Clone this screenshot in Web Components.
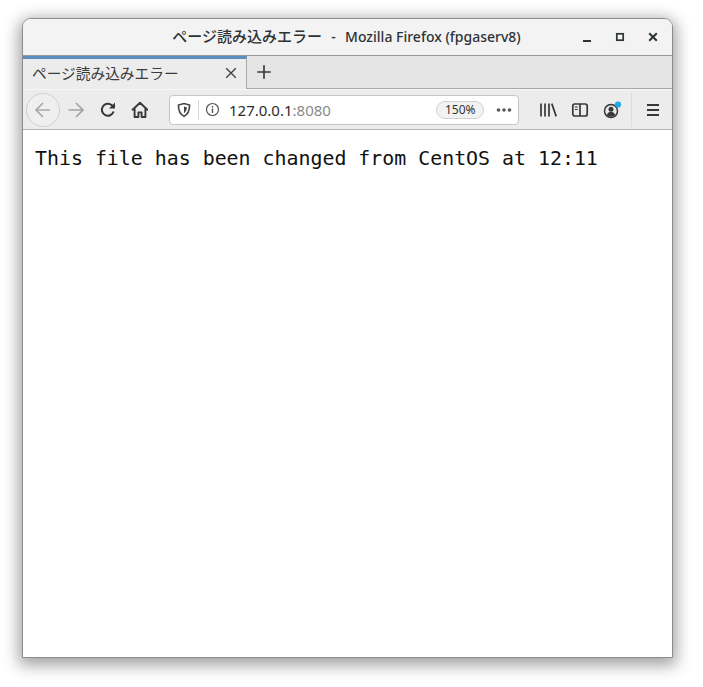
<!DOCTYPE html>
<html>
<head>
<meta charset="utf-8">
<title>ページ読み込みエラー</title>
<style>
html,body{margin:0;padding:0;background:#fff;}
body{width:703px;height:687px;overflow:hidden;padding:18px 0 0 22px;box-sizing:border-box;font-family:"Noto Sans","Noto Sans CJK JP",sans-serif;}
.jp{font-size:15px;}
.dash{padding:0 2px;}
</style>
</head>
<body>
<ff-window>
  <ff-titlebar><span class="jp">ページ読み込みエラー</span> &nbsp;<span class="dash">-</span>&nbsp; Mozilla Firefox (fpgaserv8)</ff-titlebar>
  <ff-tabs>ページ読み込みエラー</ff-tabs>
  <ff-toolbar></ff-toolbar>
  <ff-page>This file has been changed from CentOS at 12:11</ff-page>
</ff-window>
<script>
class FfWindow extends HTMLElement {
    connectedCallback() {
        let root = this.attachShadow({ mode: 'open' });
        root.innerHTML = `
    <style>
    :host{
        display:flex;
        flex-direction:column;
        width:651px;
        height:640px;
        box-sizing:border-box;
        border:1px solid #8c8c8c;
        border-radius:9px 9px 0 0;
        background:#fff;
        box-shadow:0 4px 16px 3px rgba(0,0,0,.38);
        overflow:hidden;
    }
    </style>
    <slot></slot>`;
    }
}
class FfTitlebar extends HTMLElement {
    connectedCallback() {
        let root = this.attachShadow({ mode: 'open' });
        root.innerHTML = `
    <style>
    :host{
        display:block;
        position:relative;
        height:36px;
        flex:none;
        background:#f3f3f3;
        border-bottom:1px solid #9a9a9a;
        color:#2e3436;
        font:500 14px "Noto Sans","Noto Sans CJK JP",sans-serif;
    }
    .t{height:35px;line-height:35px;text-align:center;padding-right:2px;white-space:nowrap;}
    .b{position:absolute;top:0;right:10px;height:35px;display:flex;align-items:center;gap:15px;}
    svg{display:block;}
    </style>
    <div class="t"><slot></slot></div>
    <div class="b">
      <svg width="18" height="18" viewBox="0 0 18 18"><rect x="5" y="12" width="8" height="2" fill="#2e3436"/></svg>
      <svg width="18" height="18" viewBox="0 0 18 18"><rect x="5.800" y="5.800" width="6.400" height="6.400" fill="none" stroke="#2e3436" stroke-width="1.700"/></svg>
      <svg width="18" height="18" viewBox="0 0 18 18"><path d="M5.200 5.200l7.600 7.600M12.800 5.200l-7.600 7.600" stroke="#2e3436" stroke-width="2" fill="none"/></svg>
    </div>`;
    }
}
class FfTabs extends HTMLElement {
    connectedCallback() {
        let root = this.attachShadow({ mode: 'open' });
        root.innerHTML = `
    <style>
    :host{
        display:flex;
        height:32px;
        flex:none;
        background:#e4e4e4;
        border-bottom:1px solid #a8a8a8;
        font:14.7px "Noto Sans","Noto Sans CJK JP",sans-serif;
        color:#3b3b3b;
    }
    .tab{
        width:224px;
        box-sizing:border-box;
        background:#ececec;
        border-top:3px solid #5c8dbf;
        border-right:1px solid #a8a8a8;
        margin-bottom:-1px;
        display:flex;
        align-items:center;
        justify-content:space-between;
        padding:0 8px 3px 9px;
    }
    .new{width:34px;display:flex;align-items:center;justify-content:center;}
    svg{display:block;}
    </style>
    <div class="tab"><span><slot></slot></span>
      <svg width="14" height="14" viewBox="0 0 14 14"><path d="M2.200 2.200l9.600 9.600M11.800 2.200l-9.600 9.600" stroke="#444" stroke-width="1.400" fill="none"/></svg>
    </div>
    <div class="new">
      <svg width="16" height="16" viewBox="0 0 16 16"><path d="M8 1.300v13.400M1.300 8h13.400" stroke="#3c3c3c" stroke-width="1.700" fill="none"/></svg>
    </div>`;
    }
}
class FfToolbar extends HTMLElement {
    connectedCallback() {
        let root = this.attachShadow({ mode: 'open' });
        root.innerHTML = `
    <style>
    :host{
        display:flex;
        align-items:center;
        height:41px;
        flex:none;
        box-sizing:border-box;
        background:#ececec;
        border-top:1px solid #f6f6f6;
        border-bottom:1px solid #b4b4b4;
        padding-left:3px;
        font:14px "Noto Sans",sans-serif;
        color:#2f2f2f;
    }
    svg{display:block;flex:none;}
    .back{
        width:32px;height:32px;border-radius:50%;
        border:1px solid #cfcfcf;background:#efefef;
        display:flex;align-items:center;justify-content:center;flex:none;
    }
    .nav{display:flex;align-items:center;gap:13px;margin-left:6px;}
    .url{
        width:350px;height:30px;box-sizing:border-box;margin-left:21px;
        background:#fff;border:1px solid #c6c6c6;border-radius:4px;
        display:flex;align-items:center;padding:0 6px 0 6px;flex:none;
    }
    .sep{width:1px;height:20px;background:#d4d4d4;margin:0 6px 0 6px;}
    .addr{margin-left:9px;flex:1;font-size:15px;white-space:nowrap;color:#2b2b2b;}
    .addr span{color:#8a8a8a;}
    .zoom{
        font-size:12px;height:18px;line-height:16px;box-sizing:border-box;
        padding:0 7.500px;border:1px solid #d2d2d2;border-radius:9px;background:#f2f2f2;color:#333;
    }
    .dots{margin-left:12px;}
    .tools{display:flex;align-items:center;gap:12px;margin-left:19px;}
    .div{width:1px;height:34px;background:#dcdcdc;margin-left:9px;flex:none;}
    .menu{margin-left:13px;}
    </style>
    <div class="back">
      <svg width="20" height="20" viewBox="0 0 20 20"><path d="M17 10H3.500M10 3l-7 7 7 7" fill="none" stroke="#a9a9a9" stroke-width="1.700"/></svg>
    </div>
    <div class="nav">
      <svg width="20" height="20" viewBox="0 0 20 20"><path d="M2.500 10H16M10 3l7 7-7 7" fill="none" stroke="#a3a3a3" stroke-width="1.700"/></svg>
      <svg width="18" height="18" viewBox="0 0 18 18"><path d="M14.600 10.500A6 6 0 1 1 12.800 4.200L15 6.200" fill="none" stroke="#383838" stroke-width="2"/><path d="M16 1.500V7.600H10z" fill="#383838"/></svg>
      <svg width="18" height="18" viewBox="-1 0 18 18"><path d="M1 9.200 9 1.800l8 7.400M3.600 7.600V16h3.800v-4.600h3.200V16h3.800V7.600" fill="none" stroke="#383838" stroke-width="1.900" stroke-linejoin="round"/></svg>
    </div>
    <div class="url">
      <svg width="16" height="16" viewBox="0 0 16 16"><path d="M8 1.600l5.600 1.500c0 5.500-1.600 9.300-5.600 11.300C4 12.400 2.400 8.600 2.400 3.100z" fill="none" stroke="#444" stroke-width="1.600"/><path d="M8 4.500l2.800.8C10.800 8 10 10 8 11.200z" fill="#444"/></svg>
      <div class="sep"></div>
      <svg width="15" height="15" viewBox="0 0 15 15"><circle cx="7.500" cy="7.500" r="6" fill="none" stroke="#555" stroke-width="1.200"/><rect x="6.800" y="6.500" width="1.400" height="4.500" fill="#555"/><rect x="6.800" y="4" width="1.400" height="1.500" fill="#555"/></svg>
      <div class="addr">127.0.0.1<span>:8080</span></div>
      <div class="zoom">150%</div>
      <svg class="dots" width="16" height="6" viewBox="0 0 16 6"><circle cx="2.500" cy="3" r="1.800" fill="#555"/><circle cx="8" cy="3" r="1.800" fill="#555"/><circle cx="13.500" cy="3" r="1.800" fill="#555"/></svg>
    </div>
    <div class="tools">
      <svg width="20" height="18" viewBox="0 0 20 18"><path d="M3 2.500v13M7 2.500v13M11 2.500v13M13.800 2.600l4.400 12.800" fill="none" stroke="#383838" stroke-width="1.700"/></svg>
      <svg width="20" height="18" viewBox="0 0 20 18"><rect x="2.800" y="3" width="14.400" height="12" rx="2" fill="none" stroke="#383838" stroke-width="1.700"/><path d="M10 3v12" stroke="#383838" stroke-width="1.700"/><path d="M4.800 6h3M4.800 8.500h3" stroke="#383838" stroke-width="1.200"/></svg>
      <svg width="20" height="20" viewBox="0 0 20 20"><circle cx="9" cy="11" r="6.500" fill="none" stroke="#383838" stroke-width="1.500"/><circle cx="9" cy="9.300" r="2.500" fill="#383838"/><path d="M4.800 15c.8-2.500 2.400-3.300 4.200-3.300s3.400.8 4.200 3.300A6 6 0 0 1 4.800 15z" fill="#383838"/><circle cx="16" cy="4.500" r="3.100" fill="#1ea7f0"/></svg>
    </div>
    <div class="div"></div>
    <svg class="menu" width="16" height="16" viewBox="0 0 16 16"><path d="M2 3h12M2 8h12M2 13h12" stroke="#383838" stroke-width="1.800" fill="none"/></svg>`;
    }
}
class FfPage extends HTMLElement {
    connectedCallback() {
        let root = this.attachShadow({ mode: 'open' });
        root.innerHTML = `
    <style>
    :host{
        display:block;
        flex:1;
        background:#fff;
        padding:14px 0 0 12px;
        font:19.900px/29px "DejaVu Sans Mono",monospace;
        color:#111;
        white-space:nowrap;
    }
    </style>
    <slot></slot>`;
    }
}
customElements.define('ff-window', FfWindow);
customElements.define('ff-titlebar', FfTitlebar);
customElements.define('ff-tabs', FfTabs);
customElements.define('ff-toolbar', FfToolbar);
customElements.define('ff-page', FfPage);
</script>
</body>
</html>
